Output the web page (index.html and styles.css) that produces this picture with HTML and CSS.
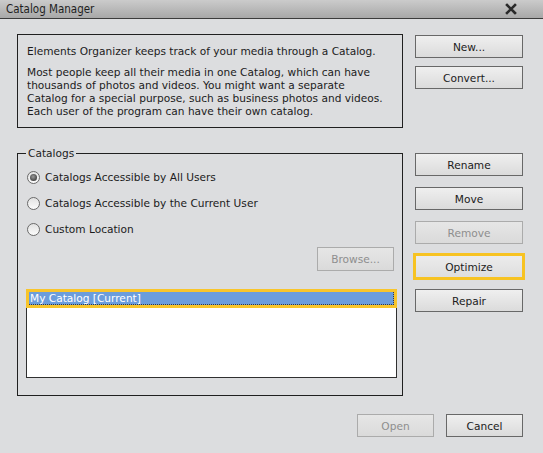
FILE: index.html
```html
<!DOCTYPE html>
<html>
<head>
<meta charset="utf-8">
<link rel="stylesheet" href="styles.css">
</head>
<body>
<div class="window">
  <div class="titlebar">
    <span class="title">Catalog Manager</span>
    <svg class="close" width="12" height="12" viewBox="0 0 12 12"><path d="M2 2 L10 10 M10 2 L2 10" stroke="#2a2a2a" stroke-width="2.6" stroke-linecap="square"/></svg>
  </div>
  <div class="content">
    <div class="row">
      <div class="info">
        <p>Elements Organizer keeps track of your media through a Catalog.</p>
        <p>Most people keep all their media in one Catalog, which can have<br>thousands of photos and videos. You might want a separate<br>Catalog for a special purpose, such as business photos and videos.<br>Each user of the program can have their own catalog.</p>
      </div>
      <div class="btncol top">
        <button class="btn">New...</button>
        <button class="btn">Convert...</button>
      </div>
    </div>
    <div class="row mid">
      <div class="group">
        <span class="legend">Catalogs</span>
        <div class="radios">
          <div class="radio"><span class="circle checked"></span>Catalogs Accessible by All Users</div>
          <div class="radio"><span class="circle"></span>Catalogs Accessible by the Current User</div>
          <div class="radio"><span class="circle"></span>Custom Location</div>
        </div>
        <div class="browse-row"><button class="btn disabled browse">Browse...</button></div>
        <div class="list">
          <div class="item"><span class="item-text">My Catalog [Current]</span></div>
        </div>
      </div>
      <div class="btncol side">
        <button class="btn">Rename</button>
        <button class="btn">Move</button>
        <button class="btn disabled">Remove</button>
        <button class="btn focus">Optimize</button>
        <button class="btn">Repair</button>
      </div>
    </div>
    <div class="footer">
      <button class="btn disabled small">Open</button>
      <button class="btn small">Cancel</button>
    </div>
  </div>
</div>
</body>
</html>
```

FILE: styles.css
```css
html, body {
  margin: 0;
  padding: 0;
}
body {
  width: 543px;
  height: 453px;
  background: #dcdddf;
  font-family: "DejaVu Sans", Verdana, sans-serif;
  font-size: 10.6px;
  color: #1b1b1b;
  overflow: hidden;
}
.window {
  width: 543px;
  height: 453px;
  display: flex;
  flex-direction: column;
}
.titlebar {
  height: 18px;
  border-bottom: 1px solid #3c3c3c;
  background: linear-gradient(#cbcbcb, #a8a8a8);
  display: flex;
  align-items: center;
  justify-content: space-between;
  padding: 0 26px 0 6px;
  flex-shrink: 0;
}
.title {
  font-family: "DejaVu Sans Condensed", "DejaVu Sans", sans-serif;
  font-stretch: condensed;
  font-size: 11.5px;
  color: #1e1e1e;
  line-height: 18px;
}
.close {
  display: block;
}
.content {
  padding: 15px 20px 0 17px;
  display: flex;
  flex-direction: column;
}
.row {
  display: flex;
  align-items: flex-start;
  gap: 12px;
}
.info {
  box-sizing: border-box;
  width: 386px;
  height: 94px;
  border: 1px solid #202020;
  padding: 10px 9px 0 9px;
  line-height: 13px;
}
.info p {
  margin: 0 0 8px 0;
  white-space: nowrap;
}
.btncol {
  display: flex;
  flex-direction: column;
  width: 108px;
}
.btncol.top {
  margin-top: 1px;
  gap: 8px;
}
.btncol.side {
  gap: 11px;
}
.btn {
  box-sizing: border-box;
  width: 108px;
  height: 23px;
  border: 1px solid #686868;
  background: linear-gradient(#efefef, #dbdbdb);
  font-family: "DejaVu Sans", Verdana, sans-serif;
  font-size: 10.6px;
  color: #1b1b1b;
  padding: 0;
  margin: 0;
  border-radius: 0;
}
.btn.disabled {
  border-color: #ababab;
  color: #8e8e8e;
  background: linear-gradient(#e6e6e6, #dadada);
}
.btn.focus {
  border-color: #f7c322;
  box-shadow: 0 0 0 2px #f7c322;
  background: linear-gradient(#ececec, #dedede);
}
.row.mid {
  margin-top: 25px;
}
.group {
  position: relative;
  box-sizing: border-box;
  width: 386px;
  height: 243px;
  border: 1px solid #202020;
  padding: 10px 5px 0 8px;
}
.legend {
  position: absolute;
  top: -8px;
  left: 8px;
  padding: 0 2px;
  background: #dcdddf;
  line-height: 14px;
  color: #222;
}
.radios {
  display: flex;
  flex-direction: column;
}
.radio {
  height: 26px;
  display: flex;
  align-items: center;
  gap: 5px;
  padding-left: 1px;
  color: #1b1b1b;
}
.circle {
  box-sizing: border-box;
  width: 13px;
  height: 13px;
  border-radius: 50%;
  border: 1px solid #6a6a6a;
  background: linear-gradient(#e2e2e2, #fbfbfb);
  display: flex;
  align-items: center;
  justify-content: center;
  flex-shrink: 0;
}
.circle.checked::after {
  content: "";
  width: 7px;
  height: 7px;
  border-radius: 50%;
  background: radial-gradient(circle at 45% 40%, #9a9a9a, #3a3a3a 80%);
}
.browse-row {
  display: flex;
  justify-content: flex-end;
  margin-top: 5px;
  padding-right: 3px;
}
.btn.browse {
  width: 77px;
  height: 24px;
}
.list {
  box-sizing: border-box;
  margin-top: 18px;
  width: 371px;
  height: 89px;
  border: 1px solid #303030;
  background: #ffffff;
}
.item {
  margin: -1px -1px 0 -1px;
  border: 3px solid #f8c52b;
  background: #6b9ddc;
  height: 13px;
}
.item-text {
  display: block;
  height: 12px;
  border-bottom: 1px dotted #3a3a3a;
  border-right: 1px dotted #3a3a3a;
  color: #ffffff;
  line-height: 13px;
  padding-left: 1px;
}
.footer {
  display: flex;
  justify-content: flex-end;
  gap: 12px;
  margin-top: 18px;
}
.btn.small {
  width: 77px;
}
```
